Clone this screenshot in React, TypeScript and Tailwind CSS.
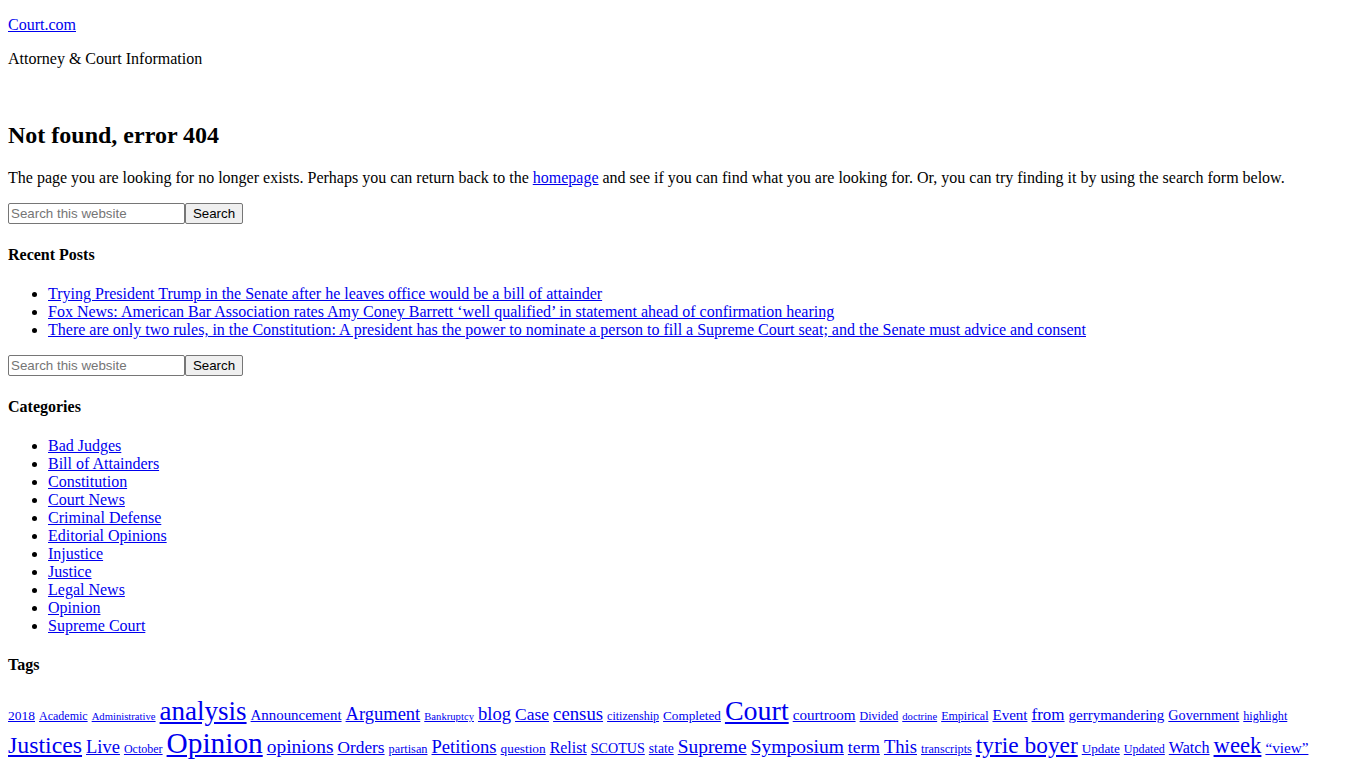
import React from "react";

const recentPosts = [
  "Trying President Trump in the Senate after he leaves office would be a bill of attainder",
  "Fox News: American Bar Association rates Amy Coney Barrett \u2018well qualified\u2019 in statement ahead of confirmation hearing",
  "There are only two rules, in the Constitution: A president has the power to nominate a person to fill a Supreme Court seat; and the Senate must advice and consent",
];

const categories = [
  "Bad Judges",
  "Bill of Attainders",
  "Constitution",
  "Court News",
  "Criminal Defense",
  "Editorial Opinions",
  "Injustice",
  "Justice",
  "Legal News",
  "Opinion",
  "Supreme Court",
];

// Tag cloud: each tag keeps its own weighted size
const tags: { name: string; cls: string }[] = [
  { name: "2018", cls: "text-[13.5px]" },
  { name: "Academic", cls: "text-[12px]" },
  { name: "Administrative", cls: "text-[10.67px]" },
  { name: "analysis", cls: "text-[27px]" },
  { name: "Announcement", cls: "text-[14.9px]" },
  { name: "Argument", cls: "text-[18.5px]" },
  { name: "Bankruptcy", cls: "text-[10.67px]" },
  { name: "blog", cls: "text-[18.6px]" },
  { name: "Case", cls: "text-[17.5px]" },
  { name: "census", cls: "text-[18.75px]" },
  { name: "citizenship", cls: "text-[12px]" },
  { name: "Completed", cls: "text-[13.2px]" },
  { name: "Court", cls: "text-[28px]" },
  { name: "courtroom", cls: "text-[15.1px]" },
  { name: "Divided", cls: "text-[12px]" },
  { name: "doctrine", cls: "text-[10.67px]" },
  { name: "Empirical", cls: "text-[12px]" },
  { name: "Event", cls: "text-[15px]" },
  { name: "from", cls: "text-[17px]" },
  { name: "gerrymandering", cls: "text-[15px]" },
  { name: "Government", cls: "text-[14.2px]" },
  { name: "highlight", cls: "text-[12.2px]" },
  { name: "Justices", cls: "text-[23.8px]" },
  { name: "Live", cls: "text-[18.5px]" },
  { name: "October", cls: "text-[12px]" },
  { name: "Opinion", cls: "text-[29.33px]" },
  { name: "opinions", cls: "text-[19.4px]" },
  { name: "Orders", cls: "text-[17.3px]" },
  { name: "partisan", cls: "text-[12.3px]" },
  { name: "Petitions", cls: "text-[18.6px]" },
  { name: "question", cls: "text-[13.3px]" },
  { name: "Relist", cls: "text-[15.9px]" },
  { name: "SCOTUS", cls: "text-[14.1px]" },
  { name: "state", cls: "text-[13.6px]" },
  { name: "Supreme", cls: "text-[19.4px]" },
  { name: "Symposium", cls: "text-[19.5px]" },
  { name: "term", cls: "text-[17.5px]" },
  { name: "This", cls: "text-[18.6px]" },
  { name: "transcripts", cls: "text-[12.2px]" },
  { name: "tyrie boyer", cls: "text-[23.4px]" },
  { name: "Update", cls: "text-[13.2px]" },
  { name: "Updated", cls: "text-[12.1px]" },
  { name: "Watch", cls: "text-[16.1px]" },
  { name: "week", cls: "text-[22.7px]" },
  { name: "\u201cview\u201d", cls: "text-[15.2px]" },
];

const linkCls = "text-[#0000ee] underline";

function SearchForm({ className }: { className: string }) {
  return (
    <form className={`flex items-stretch h-[21px] ${className}`} onSubmit={(e) => e.preventDefault()}>
      <input
        type="search"
        placeholder="Search this website"
        className="w-[177px] h-[21px] border border-[#767676] rounded-[2px] px-[2px] text-[13.33px] font-['Liberation_Sans',Arial,sans-serif] text-black placeholder:text-[#757575] outline-none"
      />
      <button
        type="submit"
        className="w-[58px] h-[21px] border border-[#767676] rounded-[2px] bg-[#efefef] text-[13.33px] text-black font-['Liberation_Sans',Arial,sans-serif] leading-none"
      >
        Search
      </button>
    </form>
  );
}

export default function App() {
  return (
    <div className="min-h-screen bg-white text-black font-['Liberation_Serif','Times_New_Roman',serif] text-[16px] leading-[18px] px-2 pb-8 flex flex-col items-start">
      <header className="flex flex-col items-start">
        <p className="mt-4">
          <a href="#" className={linkCls}>Court.com</a>
        </p>
        <p className="mt-4">Attorney &amp; Court Information</p>
      </header>

      <main className="flex flex-col items-start w-full">
        <h1 className="mt-[53px] text-[24px] leading-[28px] font-bold">Not found, error 404</h1>
        <p className="mt-[20px]">
          The page you are looking for no longer exists. Perhaps you can return back to the{" "}
          <a href="#" className={linkCls}>homepage</a> and see if you can find what you are looking for. Or, you can try finding it by using the search form below.
        </p>
        <SearchForm className="mt-4" />
      </main>

      <aside className="flex flex-col items-start w-full">
        <h4 className="mt-[22px] font-bold">Recent Posts</h4>
        <ul className="mt-[21px] list-disc pl-10">
          {recentPosts.map((t) => (
            <li key={t}>
              <a href="#" className={linkCls}>{t}</a>
            </li>
          ))}
        </ul>

        <SearchForm className="mt-4" />

        <h4 className="mt-[22px] font-bold">Categories</h4>
        <ul className="mt-[21px] list-disc pl-10">
          {categories.map((c) => (
            <li key={c}>
              <a href="#" className={linkCls}>{c}</a>
            </li>
          ))}
        </ul>

        <h4 className="mt-[21px] font-bold">Tags</h4>
        <div className="mt-[21px] w-full leading-[1.15]">
          {tags.map((t, i) => (
            <React.Fragment key={t.name}>
              <a href="#" className={`${linkCls} ${t.cls}`}>{t.name}</a>
              {i < tags.length - 1 ? " " : null}
            </React.Fragment>
          ))}
        </div>
      </aside>
    </div>
  );
}
